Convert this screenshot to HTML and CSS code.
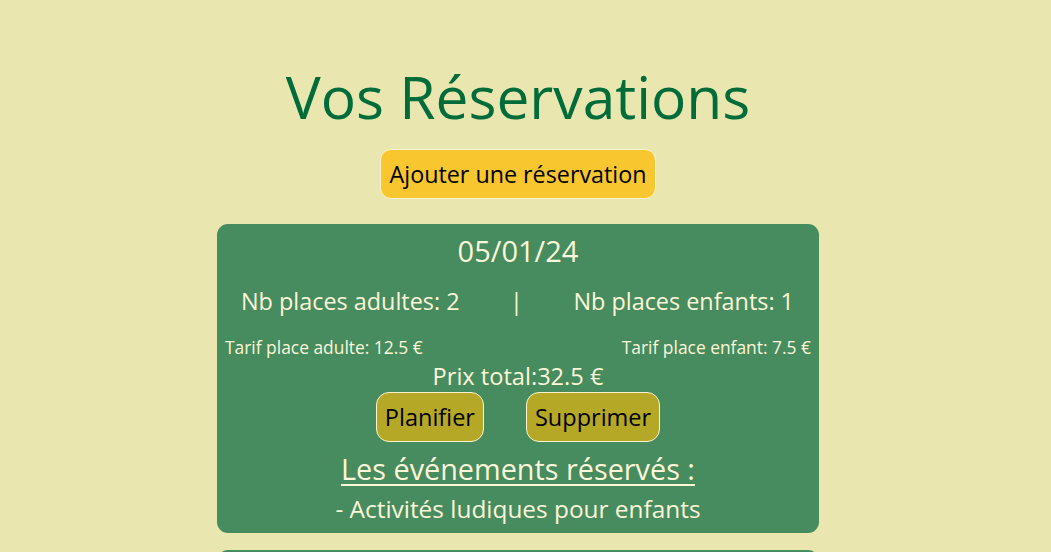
FILE: index.html
```html
<!DOCTYPE html>
<html lang="fr">
<head>
<meta charset="utf-8">
<title>Vos Réservations</title>
<link rel="stylesheet" href="styles.css">
</head>
<body>
<main class="page">
  <h1 class="title">Vos Réservations</h1>
  <button class="btn-add">Ajouter une réservation</button>
  <section class="card">
    <h2 class="date">05/01/24</h2>
    <div class="places">
      <span>Nb places adultes: 2</span>
      <span>|</span>
      <span>Nb places enfants: 1</span>
    </div>
    <div class="tarifs">
      <span>Tarif place adulte: 12.5 €</span>
      <span>Tarif place enfant: 7.5 €</span>
    </div>
    <p class="total">Prix total:32.5 €</p>
    <div class="actions">
      <button class="btn-card">Planifier</button>
      <button class="btn-card">Supprimer</button>
    </div>
    <h3 class="events-title">Les événements réservés :</h3>
    <p class="event">- Activités ludiques pour enfants</p>
  </section>
  <section class="card card-next"></section>
</main>
</body>
</html>
```
FILE: styles.css
```css
html, body {
  margin: 0;
  padding: 0;
}
body {
  background: #e9e7af;
  font-family: "Open Sans", "Noto Sans", sans-serif;
  overflow: hidden;
  height: 552px;
}
.page {
  display: flex;
  flex-direction: column;
  align-items: center;
  padding-top: 58px;
  padding-right: 15px;
}
.title {
  margin: 0;
  font-weight: 400;
  font-size: 58.7px;
  line-height: 76px;
  color: #006c3a;
}
.btn-add {
  margin-top: 15px;
  height: 50px;
  padding: 0 9px;
  background: #f8c72f;
  border: 1px solid #fbf3cf;
  border-radius: 11px;
  font-family: inherit;
  font-size: 23.3px;
  color: #000;
}
.card {
  margin-top: 25px;
  width: 602px;
  box-sizing: border-box;
  background: #468c5f;
  border-radius: 11px;
  color: #fdf6d8;
  display: flex;
  flex-direction: column;
  align-items: center;
  padding: 8px 8px 8px;
}
.card-next {
  margin-top: 17px;
  height: 120px;
  flex-shrink: 0;
}
.date {
  margin: 0;
  font-weight: 400;
  font-size: 29px;
  line-height: 38px;
}
.places {
  margin-top: 15px;
  width: 100%;
  box-sizing: border-box;
  padding: 0 17px 0 16px;
  display: flex;
  justify-content: space-between;
  font-size: 23.4px;
  line-height: 32px;
}
.tarifs {
  margin-top: 19px;
  width: 100%;
  display: flex;
  justify-content: space-between;
  font-size: 17.4px;
  line-height: 22px;
}
.total {
  margin: 4px 0 0;
  font-size: 23.6px;
  line-height: 28px;
}
.actions {
  margin-top: 2px;
  display: flex;
  gap: 42px;
}
.btn-card {
  height: 50px;
  padding: 0 8px;
  background: #b6a827;
  border: 1px solid #fbf3cf;
  border-radius: 13px;
  font-family: inherit;
  font-size: 23.5px;
  color: #000;
}
.events-title {
  margin: 9px 0 0;
  font-weight: 400;
  font-size: 28.8px;
  line-height: 36px;
  text-decoration: underline;
  text-decoration-thickness: 2px;
  text-underline-offset: 4px;
}
.event {
  margin: 6px 0 0;
  font-size: 24.4px;
  line-height: 32px;
}
```
